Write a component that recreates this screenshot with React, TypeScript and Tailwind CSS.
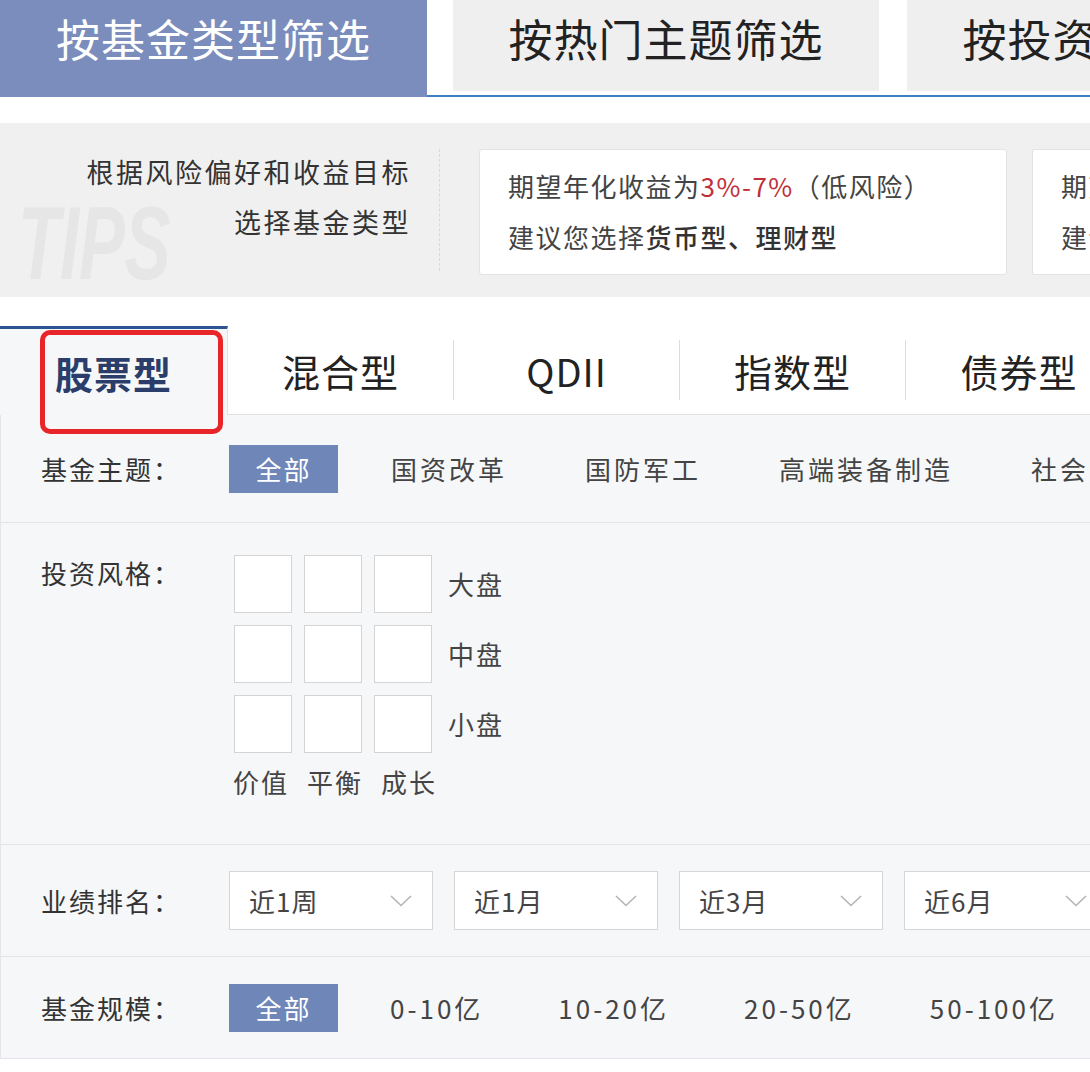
import React from 'react';

const FONT = 'font-["Noto_Sans_CJK_SC","Noto_Sans",sans-serif]';

const topTabs = ['按基金类型筛选', '按热门主题筛选', '按投资风格筛选'];
const fundTabs = ['股票型', '混合型', 'QDII', '指数型', '债券型'];
const themes = ['国资改革', '国防军工', '高端装备制造', '社会责任'];
const periods = ['近1周', '近1月', '近3月', '近6月'];
const scales = ['0-10亿', '10-20亿', '20-50亿', '50-100亿'];

function Chevron() {
  return (
    <svg width="22" height="12" viewBox="0 0 22 12" fill="none">
      <polyline points="1,1 11,10.5 21,1" stroke="#b4b4b4" strokeWidth="1.6" />
    </svg>
  );
}

function AllButton() {
  return (
    <div className="w-[109px] h-[48px] shrink-0 bg-[#6f86b8] text-white text-[26px] tracking-[2px] flex items-center justify-center leading-none">
      全部
    </div>
  );
}

function RowLabel({ children }: { children: React.ReactNode }) {
  return (
    <div className="w-[228px] shrink-0 pl-[40px] text-[26px] tracking-[2px] text-[#333] leading-[36px]">
      {children}
    </div>
  );
}

export default function App() {
  return (
    <div className={`w-[1090px] h-[1072px] overflow-hidden bg-white ${FONT}`}>
      {/* Top filter tabs */}
      <div className="flex h-[97px]">
        <div className="w-[427px] shrink-0 h-full bg-[#7a8dbd] text-white text-[44px] tracking-[1px] flex justify-center pt-[12px] leading-[52px]">
          {topTabs[0]}
        </div>
        <div className="w-[26px] shrink-0 border-b-2 border-[#3b80c2]" />
        <div className="w-[426px] shrink-0 border-b-2 border-[#3b80c2] pb-[4px]">
          <div className="h-full bg-[#efefef] text-[#222] text-[44px] tracking-[1px] flex justify-center pt-[12px] leading-[52px]">
            {topTabs[1]}
          </div>
        </div>
        <div className="w-[28px] shrink-0 border-b-2 border-[#3b80c2]" />
        <div className="w-[426px] shrink-0 border-b-2 border-[#3b80c2] pb-[4px]">
          <div className="h-full bg-[#efefef] text-[#222] text-[44px] tracking-[1px] flex justify-center pt-[12px] leading-[52px] whitespace-nowrap">
            {topTabs[2]}
          </div>
        </div>
      </div>

      <div className="h-[26px]" />

      {/* Tips */}
      <div className="relative h-[174px] bg-[#f0f0f0] flex overflow-hidden">
        <div className="absolute left-[18px] top-[68px] origin-left scale-x-[0.66] text-[104px] leading-none font-bold italic text-[#e6e6e6] font-['Liberation_Sans',sans-serif] select-none">
          TIPS
        </div>
        <div className="relative w-[440px] shrink-0 flex items-center">
          <div className="w-full h-[122px] border-r border-dashed border-[#d8d8d8] flex flex-col justify-start items-end pr-[28px] text-[27px] tracking-[2.5px] leading-[50px] text-[#333]">
            <span className="-mt-[2px]">根据风险偏好和收益目标</span>
            <span>选择基金类型</span>
          </div>
        </div>
        <div className="ml-[39px] mt-[26px] w-[528px] h-[126px] shrink-0 bg-white border border-[#e3e3e3] rounded-[3px] pl-[28px] pt-[10px] text-[26px] tracking-[1.5px] leading-[51px] text-[#444]">
          <div>
            期望年化收益为<span className="text-[#c0303a]">3%-7%</span>（低风险）
          </div>
          <div>
            建议您选择<span className="text-[#333] font-medium">货币型、理财型</span>
          </div>
        </div>
        <div className="ml-[25px] mt-[26px] w-[528px] h-[126px] shrink-0 bg-white border border-[#e3e3e3] rounded-[3px] pl-[28px] pt-[10px] text-[26px] tracking-[1.5px] leading-[51px] text-[#444] whitespace-nowrap">
          <div>期望年化收益为7%-15%（中风险）</div>
          <div>建议您选择债券型</div>
        </div>
      </div>

      <div className="h-[29px]" />

      {/* Fund type tabs */}
      <div className="relative flex h-[89px]">
        <div className="w-[228px] shrink-0 border-t-[3px] border-r border-t-[#2b5592] border-r-[#e1e1e1] bg-[#f6f7f9] flex items-center justify-center text-[38px] font-bold text-[#2a3d6b] tracking-[1px]">
          {fundTabs[0]}
        </div>
        {fundTabs.slice(1).map((t, i) => (
          <div key={t} className="w-[226px] shrink-0 border-b border-[#e1e1e1] bg-white flex items-center">
            <div className="flex-1 text-center text-[38px] text-[#222] tracking-[1px] whitespace-nowrap">{t}</div>
            {i < 3 && <div className="w-px h-[60px] bg-[#dcdcdc]" />}
          </div>
        ))}
        <div className="absolute left-[40px] top-[4px] w-[183px] h-[104px] border-[5px] border-[#e8262a] rounded-[10px]" />
      </div>

      {/* Filter rows */}
      <div className="bg-[#f6f7f9] border-l border-[#e4e6e9]">
        <div className="h-[108px] flex items-center border-b border-[#e2e4e7] overflow-hidden">
          <RowLabel>基金主题：</RowLabel>
          <AllButton />
          <div className="ml-[53px] flex shrink-0 gap-[78px] text-[26px] tracking-[3px] text-[#444] whitespace-nowrap">
            {themes.map((t) => (
              <span key={t}>{t}</span>
            ))}
          </div>
        </div>

        <div className="flex items-start border-b border-[#e2e4e7] pt-[32px] pb-[45px]">
          <RowLabel>投资风格：</RowLabel>
          <div className="ml-[5px]">
            <div className="flex flex-col gap-[12px]">
              {['大盘', '中盘', '小盘'].map((r) => (
                <div key={r} className="flex items-center">
                  <div className="grid grid-cols-3 gap-[12px]">
                    <div className="w-[58px] h-[58px] bg-white border border-[#d4d4d4]" />
                    <div className="w-[58px] h-[58px] bg-white border border-[#d4d4d4]" />
                    <div className="w-[58px] h-[58px] bg-white border border-[#d4d4d4]" />
                  </div>
                  <span className="ml-[16px] text-[26px] tracking-[2px] text-[#444] leading-none">{r}</span>
                </div>
              ))}
            </div>
            <div className="mt-[12px] flex text-[26px] tracking-[2px] text-[#444] leading-[34px] whitespace-nowrap">
              <span className="w-[74px] -ml-[1px]">价值</span>
              <span className="w-[74px]">平衡</span>
              <span>成长</span>
            </div>
          </div>
        </div>

        <div className="h-[112px] flex items-center border-b border-[#e2e4e7] overflow-hidden">
          <RowLabel>业绩排名：</RowLabel>
          <div className="flex shrink-0 gap-[21px]">
            {periods.map((p) => (
              <div
                key={p}
                className="w-[204px] h-[59px] shrink-0 bg-white border border-[#d6d6d6] flex items-center justify-between pl-[19px] pr-[20px] text-[26px] text-[#444] tracking-[1px]"
              >
                <span>{p}</span>
                <Chevron />
              </div>
            ))}
          </div>
        </div>

        <div className="h-[102px] flex items-center border-b border-[#e2e4e7] overflow-hidden">
          <RowLabel>基金规模：</RowLabel>
          <AllButton />
          <div className="ml-[52px] flex shrink-0 gap-[75px] text-[26px] tracking-[3px] text-[#444] whitespace-nowrap">
            {scales.map((s) => (
              <span key={s}>{s}</span>
            ))}
          </div>
        </div>
      </div>
    </div>
  );
}
